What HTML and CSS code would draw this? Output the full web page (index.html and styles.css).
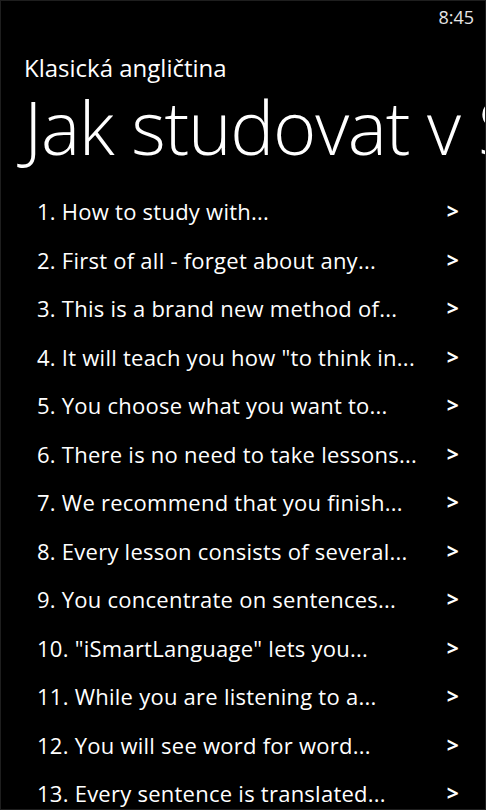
FILE: index.html
```html
<!DOCTYPE html>
<html lang="cs">
<head>
  <meta charset="UTF-8" />
  <meta name="viewport" content="width=device-width, initial-scale=1" />
  <title>Jak studovat</title>
  <link rel="stylesheet" href="styles.css">
</head>
<body>
  <div class="phone">
    <div class="status-bar">
      <span class="clock">8:45</span>
    </div>

    <header class="page-header">
      <div class="app-title">Klasická angličtina</div>
      <h1 class="page-title">Jak studovat v Smart</h1>
    </header>

    <ul class="topics">
      <li class="topic"><span class="topic-text">1. How to study with...</span><span class="chevron">&gt;</span></li>
      <li class="topic"><span class="topic-text">2. First of all - forget about any...</span><span class="chevron">&gt;</span></li>
      <li class="topic"><span class="topic-text">3. This is a brand new method of...</span><span class="chevron">&gt;</span></li>
      <li class="topic"><span class="topic-text">4. It will teach you how "to think in...</span><span class="chevron">&gt;</span></li>
      <li class="topic"><span class="topic-text">5. You choose what you want to...</span><span class="chevron">&gt;</span></li>
      <li class="topic"><span class="topic-text">6. There is no need to take lessons...</span><span class="chevron">&gt;</span></li>
      <li class="topic"><span class="topic-text">7. We recommend that you finish...</span><span class="chevron">&gt;</span></li>
      <li class="topic"><span class="topic-text">8. Every lesson consists of several...</span><span class="chevron">&gt;</span></li>
      <li class="topic"><span class="topic-text">9. You concentrate on sentences...</span><span class="chevron">&gt;</span></li>
      <li class="topic"><span class="topic-text">10. "iSmartLanguage" lets you...</span><span class="chevron">&gt;</span></li>
      <li class="topic"><span class="topic-text">11. While you are listening to a...</span><span class="chevron">&gt;</span></li>
      <li class="topic"><span class="topic-text">12. You will see word for word...</span><span class="chevron">&gt;</span></li>
      <li class="topic"><span class="topic-text">13. Every sentence is translated...</span><span class="chevron">&gt;</span></li>
    </ul>
  </div>
</body>
</html>
```

FILE: styles.css
```css
html, body {
  margin: 0;
  padding: 0;
  background: #000;
}

body {
  font-family: 'Open Sans', 'Noto Sans', sans-serif;
  color: #fff;
  overflow: hidden;
}

.phone {
  width: 486px;
  height: 810px;
  box-sizing: border-box;
  border: 1px solid #1e1e1e;
  overflow: hidden;
}

.status-bar {
  height: 32px;
  display: flex;
  justify-content: flex-end;
  align-items: center;
  padding-right: 11px;
}

.clock {
  font-size: 18px;
  color: #e6e6e6;
}

.page-header {
  padding-left: 23px;
  white-space: nowrap;
  overflow: hidden;
}

.app-title {
  font-size: 24px;
  line-height: 30px;
  margin-top: 20px;
}

.page-title {
  margin: 0;
  font-size: 74px;
  font-weight: 300;
  line-height: 88px;
  letter-spacing: -1.3px;
}

.topics {
  list-style: none;
  margin: 16px 0 0;
  padding: 0 26px 0 36px;
}

.topic {
  display: flex;
  justify-content: space-between;
  align-items: center;
  height: 48.5px;
  font-size: 22px;
  letter-spacing: 0.25px;
  white-space: nowrap;
}

.chevron {
  font-weight: 700;
  font-size: 21px;
}
```
